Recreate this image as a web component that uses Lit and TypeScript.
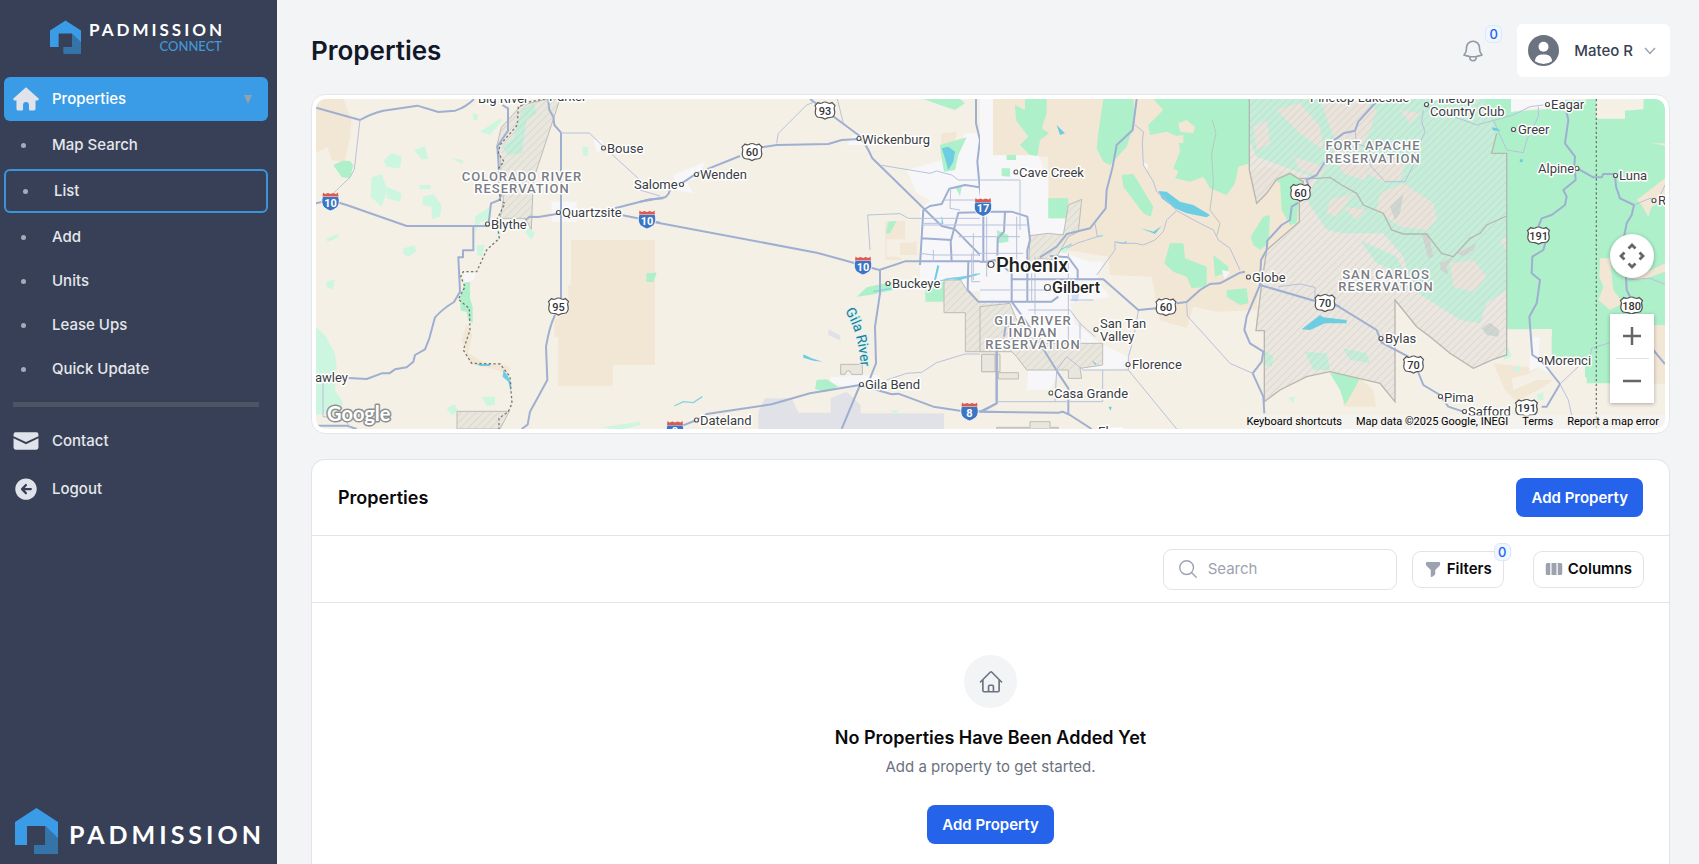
import { LitElement, html, svg, css } from "lit";
import { customElement, property, state } from "lit/decorators.js";
import { classMap } from "lit/directives/class-map.js";

/* ---------- icons ---------- */

const homeSolid = svg`<path d="M12 1.2 23.4 11.4a1.1 1.1 0 0 1-.8 1.9H20.800V21.300a1.300 1.300 0 0 1-1.300 1.300H15.700a1 1 0 0 1-1-1V17.500a2.700 2.700 0 0 0-5.400 0V21.600a1 1 0 0 1-1 1H4.500a1.300 1.300 0 0 1-1.300-1.300V13.300H1.400a1.100 1.100 0 0 1-.8-1.900Z"/>`;
const mailSolid = svg`<path d="M2.400 4h19.200A1.900 1.900 0 0 1 23.500 5.900V7.600L12 13 .5 7.600V5.900A1.900 1.900 0 0 1 2.400 4Z"/><path d="M.5 9.500 12 15l11.500-5.500V18a2 2 0 0 1-2 2h-19a2 2 0 0 1-2-2Z"/>`;
const logoutSolid = svg`<path fill-rule="evenodd" d="M12 2.200a9.900 9.900 0 1 0 0 19.800 9.900 9.900 0 0 0 0-19.800ZM11.200 7.600a1 1 0 0 1 1.500 1.400L10.900 11.100H16.500a1 1 0 0 1 0 2H10.900l1.800 2.100a1 1 0 0 1-1.500 1.400L7.600 12.900a1.100 1.100 0 0 1 0-1.500Z"/>`;
const bellLine = svg`<path d="M14.857 17.082a23.848 23.848 0 0 0 5.454-1.310A8.967 8.967 0 0 1 18 9.750V9A6 6 0 0 0 6 9v.750a8.967 8.967 0 0 1-2.312 6.022c1.733.640 3.560 1.085 5.455 1.310m5.714 0a24.255 24.255 0 0 1-5.714 0m5.714 0a3 3 0 1 1-5.714 0"/>`;
const homeLine = svg`<path d="m2.250 12 8.954-8.955c.440-.439 1.152-.439 1.591 0L21.750 12M4.500 9.750v10.125c0 .621.504 1.125 1.125 1.125H9.750v-4.875c0-.621.504-1.125 1.125-1.125h2.250c.621 0 1.125.504 1.125 1.125V21h4.125c.621 0 1.125-.504 1.125-1.125V9.750M8.250 21h8.250"/>`;
const searchLine = svg`<path d="m21 21-5.197-5.197m0 0A7.500 7.500 0 1 0 5.196 5.196a7.500 7.500 0 0 0 10.607 10.607Z"/>`;
const funnelSolid = svg`<path d="M4 2.500h16a1.500 1.500 0 0 1 1.500 1.500v1.600c0 .7-.3 1.400-.8 1.900L15 13.200V18.500c0 .6-.3 1.100-.8 1.400l-3.600 2.600c-.7.400-1.600-.1-1.600-.9v-8.400L3.300 7.500a2.700 2.700 0 0 1-.8-1.900V4A1.500 1.500 0 0 1 4 2.500Z"/>`;
const columnsSolid = svg`<path d="M3 4h4v16H3a2 2 0 0 1-2-2V6a2 2 0 0 1 2-2ZM8.700 4h6.600v16H8.700ZM17 4h4a2 2 0 0 1 2 2v12a2 2 0 0 1-2 2h-4Z"/>`;

const solid = (body: unknown, size: string) =>
  html`<svg class="icon ${size}" viewBox="0 0 24 24" fill="currentColor" aria-hidden="true">${body}</svg>`;
const line = (body: unknown, size: string) =>
  html`<svg class="icon ${size}" viewBox="0 0 24 24" fill="none" stroke="currentColor" stroke-width="1.5" stroke-linecap="round" stroke-linejoin="round" aria-hidden="true">${body}</svg>`;

const iconStyles = css`
  .icon { display: block; flex: none; }
  .s18 { width: 18px; height: 18px; }
  .s22 { width: 22px; height: 22px; }
  .s26 { width: 26px; height: 26px; }
`;

/* ---------- brand ---------- */

@customElement("brand-logo")
class BrandLogo extends LitElement {
  @property() tagline = "";
  @property({ type: Boolean, reflect: true }) large = false;

  static styles = css`
    :host { display: flex; align-items: center; gap: 8px; font-family: Lato, "Open Sans", sans-serif; }
    svg { width: 31px; height: 34px; flex: none; display: block; }
    .words { display: flex; flex-direction: column; align-items: flex-end; }
    .name { color: #fff; font-weight: 700; font-size: 17px; line-height: 18px; letter-spacing: 3px; margin-right: -3px; }
    .tag { color: #4299d8; font-size: 13px; line-height: 14px; }
    :host([large]) { gap: 11px; }
    :host([large]) svg { width: 43px; height: 46px; }
    :host([large]) .name { font-size: 25px; line-height: 24px; letter-spacing: 4px; margin-top: 6px; }
  `;

  render() {
    return html`
      <svg viewBox="0 0 43 46" aria-hidden="true">
        <path fill="#3a9be6" d="M21.500 0 43 14V46H19V37H30.500V18H12V37H0V14Z"/>
        <path fill="#3474a8" d="M30.500 18 43 30V46H19V37H30.500Z"/>
      </svg>
      <span class="words">
        <span class="name">PADMISSION</span>
        ${this.tagline ? html`<span class="tag">${this.tagline}</span>` : null}
      </span>`;
  }
}

/* ---------- sidebar ---------- */

@customElement("side-bar")
class SideBar extends LitElement {
  @state() current = "List";
  private links = ["Map Search", "List", "Add", "Units", "Lease Ups", "Quick Update"];

  static styles = [iconStyles, css`
    :host { display: flex; flex-direction: column; box-sizing: border-box; background: #374056; padding: 0 9px 10px 4px; color: #e5e7eb; font-size: 15px; line-height: 20px; font-weight: 500; }
    .top { display: flex; justify-content: center; padding: 20px 0 23px; }
    nav { display: flex; flex-direction: column; flex: 1; }
    a { color: inherit; text-decoration: none; }
    a, .group { display: flex; align-items: center; gap: 13px; box-sizing: border-box; height: 44px; padding: 0 9px; border-radius: 6px; }
    .group { font: inherit; border: 0; width: 100%; background: #3a9be6; color: #fff; margin-bottom: 2px; text-align: left; }
    .group .icon, .foot .icon { color: #e0e3ea; }
    .grow { flex: 1; }
    .arrow { width: 0; height: 0; border: 4px solid transparent; border-top: 9px solid #94a0ae; border-bottom: 0; margin-right: 7px; }
    .dot { width: 26px; display: grid; place-items: center; }
    .dot::before { content: ""; width: 5px; height: 5px; border-radius: 50%; background: #a3acba; margin-right: 6px; }
    .current { border: 2px solid #3a94da; margin: 2px 0; }
    hr { width: calc(100% - 18px); height: 5px; border: 0; background: #4c5563; margin: 11px 9px 10px; }
    .foot { height: 48px; }
    .bottom { padding-left: 11px; }
  `];

  render() {
    return html`
      <div class="top"><brand-logo tagline="CONNECT"></brand-logo></div>
      <nav aria-label="Main">
        <button class="group" type="button">${solid(homeSolid, "s26")}<span class="grow">Properties</span><span class="arrow"></span></button>
        ${this.links.map((name) => html`
          <a href="#" class=${classMap({ current: name === this.current })} @click=${() => (this.current = name)}>
            <span class="dot"></span>${name}</a>`)}
        <hr />
        <a class="foot" href="#">${solid(mailSolid, "s26")}Contact</a>
        <a class="foot" href="#">${solid(logoutSolid, "s26")}Logout</a>
      </nav>
      <div class="bottom"><brand-logo large></brand-logo></div>`;
  }
}

/* ---------- map ---------- */

type Place = { t: string; x: number; y: number; dot?: [number, number]; kind?: string };

const places: Place[] = [
  { t: "Big River", x: 478, y: 103 },
  { t: "Parker", x: 549, y: 101 },
  { t: "Bouse", x: 607, y: 153, dot: [603.5, 148.0] },
  { t: "Salome", x: 634, y: 189, dot: [681.5, 184.5] },
  { t: "Wenden", x: 700, y: 179, dot: [696.5, 174.5] },
  { t: "Wickenburg", x: 862, y: 144, dot: [859, 138.5] },
  { t: "Quartzsite", x: 562, y: 217, dot: [558.5, 212.5] },
  { t: "Blythe", x: 491, y: 229, dot: [487.5, 224.0] },
  { t: "awley", x: 315, y: 382 },
  { t: "Buckeye", x: 892, y: 288, dot: [888, 283.5] },
  { t: "Gila Bend", x: 865, y: 389, dot: [861.5, 384.5] },
  { t: "Dateland", x: 700, y: 425, dot: [696.5, 420] },
  { t: "Cave Creek", x: 1019, y: 177, dot: [1016, 172] },
  { t: "Phoenix", x: 996, y: 272, dot: [991, 264.5], kind: "city" },
  { t: "Gilbert", x: 1052, y: 293, dot: [1047.5, 287.5], kind: "town" },
  { t: "San Tan", x: 1100, y: 328, dot: [1096, 329.5] },
  { t: "Valley", x: 1100, y: 341 },
  { t: "Florence", x: 1132, y: 369, dot: [1128, 364.5] },
  { t: "Casa Grande", x: 1054, y: 398, dot: [1051, 393] },
  { t: "Eloy", x: 1098, y: 436 },
  { t: "Globe", x: 1252, y: 282, dot: [1248.5, 277] },
  { t: "Pinetop-Lakeside", x: 1310, y: 102 },
  { t: "Pinetop", x: 1430, y: 103, dot: [1426.5, 104.5] },
  { t: "Country Club", x: 1430, y: 116 },
  { t: "Eagar", x: 1551, y: 109, dot: [1547.5, 104.5] },
  { t: "Greer", x: 1518, y: 134, dot: [1513.5, 129.5] },
  { t: "Alpine", x: 1538, y: 173, dot: [1577, 168.5] },
  { t: "Luna", x: 1619, y: 180, dot: [1615.5, 175.5] },
  { t: "R", x: 1658, y: 205, dot: [1654, 200.5] },
  { t: "Bylas", x: 1385, y: 343, dot: [1381, 338.5] },
  { t: "Morenci", x: 1544, y: 365, dot: [1540.5, 359.5] },
  { t: "Pima", x: 1444, y: 402, dot: [1440.5, 396.5] },
  { t: "Safford", x: 1468, y: 416, dot: [1464.5, 411.5] },
  { t: "COLORADO RIVER", x: 522, y: 181, kind: "area" },
  { t: "RESERVATION", x: 522, y: 193, kind: "area" },
  { t: "GILA RIVER", x: 1033, y: 325, kind: "area" },
  { t: "INDIAN", x: 1033, y: 337, kind: "area" },
  { t: "RESERVATION", x: 1033, y: 349, kind: "area" },
  { t: "FORT APACHE", x: 1373, y: 150, kind: "area" },
  { t: "RESERVATION", x: 1373, y: 163, kind: "area" },
  { t: "SAN CARLOS", x: 1386, y: 279, kind: "area" },
  { t: "RESERVATION", x: 1386, y: 291, kind: "area" },
];

const interstates: [string, number, number][] = [
  ["10", 330.5, 201.5], ["10", 647, 219.5], ["10", 863, 265.5], ["17", 983, 207], ["8", 969.5, 411.5], ["8", 675, 430],
];
const usRoutes: [string, number, number][] = [
  ["95", 558.5, 306.5], ["60", 752, 152], ["93", 825, 110.5], ["60", 1166, 307], ["60", 1300.5, 192.5],
  ["70", 1325, 303], ["70", 1413.5, 364.5], ["191", 1538.5, 235.5], ["191", 1526.5, 408], ["180", 1631.5, 305.5],
];

/* Four survey sections side by side, drawn at three units to the pixel. */
const land = svg`
  <g>
    <path class="tan" d="M48 27H130L155 90 150 140 135 215 95 210 82 170 48 188ZM813 450H1065V825H938V888H775V740H763V690L790 675 805 670V585H813Z"/>
    <path class="tan" d="M485 750 500 700 517 735 505 790 560 822 600 818 635 835 620 850 570 835 510 822Z"/>
    <path class="urban" d="M755 335H830V395H755ZM880 150 905 150 920 180 890 185ZM490 548 530 550 520 570 495 578Z"/>
    <path class="mint" d="M100 225 128 212 150 213 160 225 150 265 125 262ZM495 577H510V625L518 650V700L505 690 500 665 482 662 480 620ZM1040 550 1070 548 1060 575 1040 575Z"/>
    <path class="pale" d="M48 712 75 735 105 790 110 830 105 900 130 940 115 965 48 975ZM250 212 275 188 305 200 300 235 260 230ZM343 180 375 168 385 208 365 208ZM455 205 490 210 488 222ZM215 262 245 252 262 300 245 350 212 320ZM262 290 305 310 300 335 260 325ZM358 285H392V298H358ZM368 320 400 312 425 345 420 380 395 388 395 350 368 345ZM310 475 345 465 348 485 325 500 308 490ZM80 575 105 568 98 600 80 592ZM80 445 120 430 110 445 82 455ZM525 380 570 350 572 390 540 395 525 430ZM530 465 555 465 545 500 532 495ZM540 125 600 85 605 92 570 135ZM518 68 535 75 530 92 520 88ZM848 170 865 170 862 200 848 195ZM676 405 705 430 695 450 678 430ZM545 920 585 920 585 945 560 948ZM440 955 465 942 475 965 455 975ZM905 1012 1020 995 1020 1005 960 1020ZM590 420 600 430 597 450Z"/>
    <path class="res" d="M604 112 665 45 745 27H780L700 270 694 418 676 385 600 385 610 330 600 200 590 170Z"/>
    <path class="res" d="M471 964H628L600 1017H471Z"/>
    <path class="mintres" d="M665 60 700 40 710 70 680 90 665 190 625 195 605 170 640 145Z"/>
    <path class="water" d="M530 822 570 822 570 828 540 828ZM610 840 622 855 634 880 632 905 625 875 608 860Z"/>
    <path class="road" d="M48 53 180 90Q210 72 250 62L352 47 415 66 466 62Q500 50 522 27M48 340 90 330 140 345 320 408H565L573 340 598 330 605 310M520 408V481H489V502H475L480 605 462 636Q430 655 405 682L388 745 375 778 345 795 340 815 320 832 285 838 268 850H245L200 867 145 864M607 45 624 55V122L592 170 597 240M744 27 748 60 760 80 763 105 783 128V625M765 675Q748 710 738 770L742 870Q715 920 690 965L683 1004 665 1017M676 390 690 380 715 381 783 370M905 372 968 376 1080 398M945 355 1050 328 1090 325M48 1007H140L170 1017"/>
    <path class="minor" d="M180 90 163 238 150 262 100 310M783 129H868L900 160 1020 270M69 875V980L130 985 150 1010M1020 300 1080 318"/>
    <path class="border" d="M735 27 690 35 655 50 652 105 600 165 595 190 612 215 595 235 600 330 615 340 590 390 598 445 560 480 530 545H490L482 560 495 590 475 628 508 655 510 720 490 780 515 820 600 822 630 860 636 940 625 965 597 985V1017"/>
  </g>
  <g transform="translate(1020)">
    <path class="tan" d="M735 395 795 392V448H740V500L775 500 790 510H735ZM905 130 950 125 940 190H900ZM880 300 940 290 930 330H905ZM780 460 830 455V495H780ZM1060 27H1080V196H1060Z"/>
    <path class="gray" d="M375 925 455 925 475 968H572V925L620 905 662 945V970H912V1017H355V965ZM565 718 600 735 602 752 565 735Z"/>
    <path class="urban" d="M800 240 940 200 975 130H1020V27H1080V600L980 605 960 575 840 580V360L870 330 830 310ZM100 255 150 235 195 215 180 260 140 275 160 310 110 300ZM570 862 720 855 690 895 575 885ZM640 135H700V165H620Z"/>
    <path class="mint" d="M900 165 980 142 955 195 945 240 912 245 905 205ZM850 27H960L975 40 945 60 900 45ZM650 620 680 592 780 570 760 600 690 615ZM856 590 912 575V635H856ZM20 550 48 548 40 575H20ZM530 870 560 868 595 890 560 905 525 898ZM738 430 745 395 770 392 750 430ZM945 290 965 290 960 318Z"/>
    <path class="pale" d="M750 962 775 960 770 972ZM975 635 1000 670 990 672Z"/>
    <path class="res" d="M912 570H962L980 600 1015 637H1080V785H976V668H912ZM602 823H667V853H635L630 843H620L615 853H602ZM1025 793H1080V845H1025Z"/>
    <path class="water" d="M905 175 925 170 945 185 940 215 925 240 915 205ZM490 793 515 805 548 815 520 812 490 803ZM882 570 892 525 898 528 888 570ZM912 565 975 560 1010 550 1010 556 960 570ZM905 375 910 400 905 405Z"/>
    <path class="wline" d="M103 948 130 935 160 938 187 920M700 605 755 595M890 575 920 568 1000 556 1045 545"/>
    <path class="road" d="M0 335 75 322Q92 310 90 290L125 280 170 250 300 198M365 172 410 165 565 162 605 150 657 147M510 27 655 135Q680 165 697 205L905 408 945 418 1030 505M25 393 530 488 640 518 718 540 795 514H1080M720 540V610L705 710 708 820 690 865M120 1010 170 990 200 972 395 943 510 910 660 885 755 913 775 911 880 950 960 962 1080 966M660 885 605 1017M840 525 850 360 870 348 905 342 928 296 975 285 1018 292M1008 27V100L1020 150 1012 215 1018 280 1025 340V515M845 445 935 450M935 515 932 455 955 368 1080 365M985 515 983 600 1015 635H1080M1070 780V940L1030 963M1030 515V535H1060"/>
    <path class="minor" d="M410 160 415 130 500 45 525 35M592 27 610 100M725 226 870 250 890 243 935 255 955 270H1020M690 480 683 375 780 371 805 385H1080M740 870 800 850 845 847 890 818 975 792H1020M840 490 880 495 1030 495M845 405H1080M910 330H1010M1000 430V570M850 400H910M932 300 930 355 960 360M955 440H1080M995 490V575H1080M880 480V515"/>
  </g>
  <g transform="translate(2040)">
    <path class="tan" d="M38 27H808V240L830 340 860 310 890 268 930 250 970 275 958 390 860 480 838 585 830 660 710 665 640 650 620 715 540 690 515 560 390 555 385 500 260 480 180 400 205 330V200H38Z"/>
    <path class="tan" d="M0 595 95 585 60 610 0 625ZM15 280H65L50 350 15 330Z"/>
    <path class="urban" d="M0 27H38V196H175L205 270V385H260L255 430 150 440 145 545 200 490 260 490 330 515H370L350 570 390 620 270 640 285 700 360 760 445 800 450 835 240 840 210 900 140 900 150 780 90 690 95 640H0ZM680 45 720 40 715 65 690 62Z"/>
    <path class="mint" d="M135 27H200V70L185 115 207 130 180 150 172 198 150 195 120 165 145 140 108 90 105 45 135 60ZM370 27H460L465 95 440 170 390 225 370 215 350 175 355 130ZM520 27H808V220L775 230 765 280 740 315 690 295 670 260 630 275 585 265 595 245 580 235 600 185 595 140 560 125 510 135 505 105 550 60ZM425 255 460 252 520 350 512 380 490 370 430 290ZM205 325H265L263 385H205ZM570 460 610 460 615 505 680 530V590L635 595 620 560 580 545 553 520ZM812 440 850 380 870 375 865 460 840 480 820 465ZM740 600 800 595 805 640 780 645 740 620ZM700 495 745 530 745 545 705 560ZM65 235 90 235 90 260 65 258ZM80 195H108V210H80ZM50 420 85 435 85 455 55 460ZM900 270 925 255 960 270 950 400 930 405 905 360Z"/>
    <path class="tan" d="M595 100 620 90 645 110 640 130 600 125ZM565 140 610 135 610 160 575 155Z"/>
    <path class="pale" d="M925 925 945 918 940 940ZM230 470 270 480 250 490Z"/>
    <path class="urban" d="M725 540 750 545 735 568ZM485 215 505 225 500 240Z"/>
    <path class="res" d="M265 345 305 328 295 425 265 440 225 510 175 505 145 545 150 437 205 430 250 435ZM0 650 90 640 110 690 200 760H368V825L300 835 305 865H265V840H140L110 800 95 785H0ZM5 793H45V845H5ZM55 848H115V867H55ZM50 1017V1012H150V995H210V1012H235V1017Z"/>
    <path class="water" d="M535 303 560 305 600 335 640 345 690 375 680 382 620 370 585 355 545 325ZM230 105 255 130 240 135ZM482 415 520 425 545 408 525 432ZM385 950 395 950 392 962ZM335 810 350 822 345 824Z"/>
    <path class="lake" d="M275 612H298L292 635 275 632Z"/>
    <path class="wline" d="M240 480 275 462M350 440 368 437M410 457 430 460 440 455"/>
  </g>
  <g transform="translate(3090)">
    <path class="mint" d="M-282 27H543V65L690 55 705 30H770V27H799V85H885V60L940 55V27H1005V880H770V832L700 760 665 755V718H530V760L490 700-270 200Z"/>
    <path class="urban" d="M543 27H705L700 50 600 55 543 65Z"/>
    <path class="tan" d="M810 505H840L850 600 880 640 840 660 805 630 820 590 808 560ZM920 330 1005 265V330L965 350 955 380 935 345ZM965 160H1005V167ZM900 570 1005 520V545L935 570ZM970 705H1005V880H970ZM40 860 90 865 130 900 138 950 40 950Z"/>
    <path class="cream" d="M799 27H940V58L885 62V86H799ZM530 760H605L600 718H665V800H700L765 862V880H530Z"/>
    <path class="tan" d="M490 820 620 835 600 850 545 865 550 900 620 870 670 870 640 890 560 935 525 900Z"/>
    <path class="urban" d="M610 742 630 742 625 790 640 810 660 850 625 830 598 845 600 790Z"/>
    <path class="mint" d="M0 850 60 850 90 865 60 920 45 945 30 900ZM665 740V800H765V862H800V740Z"/>
    <path class="pale" d="M620 915 640 905 640 930 625 932ZM535 770 545 800 520 810ZM545 840 570 825 570 845Z"/>
  </g>`;

const reserve = svg`
  <path class="resbase" d="M2848 27V240L2870 340 2900 310 2930 268 2970 250 3010 275 2998 330V395L2900 480 2885 580 2868 722H2893V935L2940 900 3020 860 3090 845 3240 880 3285 935V630L3350 710 3390 740 3450 790 3520 835 3580 808 3620 795V190H3575L3590 130 3550 27Z"/>
  <g clip-path="url(#reserve)">
    <path class="mintres" d="M2848 27H3620V600L3560 640 3540 700 3480 690 3340 600 3310 500 3250 430 3130 430 3080 420 3020 330 3050 265 2980 240 2870 200 2848 150Z"/>
    <path class="mintres" d="M2893 780 2920 800 2915 830 2893 825ZM3015 785 3080 790 3090 840 3040 840ZM3130 775 3200 790 3210 820 3150 810ZM3440 650 3520 610 3530 650 3470 680Z"/>
    <path class="beige" d="M2860 110 2900 90 2910 160 2870 180ZM2930 60 3000 40 3060 110 3070 180 3000 130 2960 90ZM3060 27H3180L3230 60 3210 120 3180 180 3100 140ZM3090 180 3210 190 3320 210 3300 270 3220 280 3130 250ZM3240 310 3310 280 3400 340 3410 390 3380 420 3300 410 3230 360ZM3450 520 3520 510 3560 560 3520 605 3460 590ZM2980 200 3080 230 3060 260 3000 240ZM3090 330 3160 310 3110 380 3080 370ZM3300 60 3360 70 3330 100ZM2890 230 2970 250 2870 330 2850 250ZM3600 450 3620 440V480ZM3130 350 3200 360 3170 390Z"/>
    <path class="mintres" d="M3200 250 3260 280 3230 330 3190 330ZM3400 180 3500 150 3600 260 3520 330 3420 320ZM3340 450 3450 460 3420 560 3340 540ZM3230 40 3290 50 3270 100ZM3180 450 3290 500 3320 560 3230 520Z"/>
    <path class="rock" d="M3270 350 3310 312 3300 370 3285 390ZM3365 430 3385 430 3400 500 3385 505ZM3470 490 3530 460 3520 480 3490 500ZM3420 520 3460 500 3440 530 3445 555 3422 540ZM3545 715 3570 698 3598 720 3595 740 3560 735Z"/>
    <path fill="url(#hatch)" d="M2848 27H3620V940H2848Z"/>
    <path class="water" d="M3005 718 3060 675 3070 682 3140 690V700L3075 700 3030 720Z"/>
  </g>
  <path class="edge" d="M3000 265 3050 265 3090 262 3125 285 3170 310 3190 345 3250 370 3275 420 3310 432 3380 432 3425 490 3460 500 3510 445 3540 430 3560 405 3620 378"/>
  <path class="edge" d="M2848 27V240L2870 340 2900 310 2930 268 2970 250 3010 275 2998 330V395L2900 480 2885 580 2868 722H2893V935L2940 900 3020 860 3090 845 3240 880 3285 935V630L3350 710 3390 740 3450 790 3520 835 3580 808 3620 795V190H3575L3590 130"/>
  <g transform="translate(2040)">
    <path class="road" d="M10 365V515M0 365H95L142 380 150 450 142 480V635M75 365 72 425 53 445 52 515M0 515H20L45 510 95 550V635L135 690 170 745 235 850 265 895V970M470 27 458 120 410 165 398 230 380 300 377 355 330 415 260 432 230 470 180 502M210 498 265 502 293 540V565M95 568H370L475 660 530 655M0 635H215L235 620M590 640 620 636 660 600 690 582 720 580 780 548 795 545M840 585 1005 633M1065 645 1080 650M1035 215 1010 255 980 270 985 285M955 338 935 350 930 390 905 405 862 452 860 480 843 510 840 585 800 680 793 720 810 760 850 785 845 815 818 850 850 920 853 970M50 780V940L0 965 235 968 248 965 270 975 335 1017M108 780 80 690 72 740"/>
    <path class="minor" d="M465 105 490 125 487 160 490 225 520 275 530 305 560 330 590 362 660 400 700 420 715 450 750 475 780 540M590 362 560 390 550 425 525 450 490 465 465 460 430 460 405 455V480L350 555M345 400 352 440 290 460 260 475M475 662 460 750 445 800 445 840 590 1017M620 640 622 678 660 720 750 820 818 850M0 405H140M0 440H120M0 490H130M50 935H368V840M225 935 230 840 260 800 310 840H445M155 550V635M165 500V690M265 490V780M145 660H270L300 700V780M270 630H340M300 700 345 740M895 590 960 582 1005 592V630M95 600H280M20 380V560M110 380V510M0 270H120V420M0 600H90"/>
    <path class="minor faint" d="M697 90 708 130 695 190 700 280 690 360 720 400 710 440"/>
  </g>
  <g transform="translate(3090)">
    <path class="road" d="M10 640 140 720 155 758 235 800M262 840 280 885 330 915 355 950 400 965M635 950H650L690 882 645 825 628 808 607 795 598 680 620 640 630 570 605 550 607 500 640 480 650 445M625 410 635 385 665 375 705 345 710 320 700 300 737 270 733 225 735 200 705 160 715 90 708 60M742 235 790 262H815L820 252H855L858 290 870 325 912 345 905 375 890 400 882 440M888 560 890 600 900 620M970 780 1005 822"/>
    <path class="road" d="M0 160 40 130 75 122 85 95 130 45 150 27"/>
    <path class="minor" d="M280 60 275 95 285 125 270 160 258 210 225 275H165L120 225 118 175 80 160 75 122M285 50 400 90 440 105 550 75 600 50 640 45M490 90 530 180 580 188 590 150 625 80V50M690 882 745 830M690 882 715 930 725 975M780 800 785 775 840 758M912 345 960 325 975 330M985 330 1005 285M888 570 960 565 1005 583"/>
    <path class="border" d="M799 27V1017"/>
    <path class="water" d="M485 112 500 115 512 122 490 122ZM569 212A5 5 0 1 1 579 212 5 5 0 1 1 569 212Z"/>
  </g>`;

@customElement("area-map")
class AreaMap extends LitElement {
  static styles = css`
    :host { display: block; position: relative; height: 330px; border-radius: 10px; overflow: hidden; background: #f5f0e5; font-family: Roboto, sans-serif; }
    .canvas { display: block; width: 100%; height: 100%; }
    .tan { fill: #f2e6d5; } .cream { fill: #f5f0e5; } .urban { fill: #f7f7f9; } .gray { fill: #e1e2e7; }
    .mint { fill: #adf0ca; } .pale { fill: #cdf6e0; } .water { fill: #6dcde3; } .lake { fill: #cfdcf8; }
    .resbase { fill: #ebe6df; } .mintres { fill: #c4eed9; } .beige { fill: #eae3db; } .rock { fill: #cfd5d0; }
    .res { fill: #e9e6de; stroke: #bdbcb7; stroke-width: 3; }
    .edge { fill: none; stroke: #b5b7b0; stroke-width: 4; }
    .road { fill: none; stroke: #9fafd1; stroke-width: 6; stroke-linejoin: round; }
    .minor { fill: none; stroke: #b7c1dc; stroke-width: 3; stroke-linejoin: round; }
    .faint { stroke: #b9c8c0; }
    .wline { fill: none; stroke: #83d3e4; stroke-width: 4; }
    .border { fill: none; stroke: #777; stroke-width: 4; stroke-dasharray: 7 7; }
    .label { font-size: 13px; fill: #3b3d42; stroke: #fff; stroke-width: 3px; stroke-linejoin: round; paint-order: stroke; }
    .area { text-anchor: middle; letter-spacing: 1px; fill: #7a7d85; font-weight: 500; }
    .city { font-size: 20px; font-weight: 500; fill: #222; }
    .town { font-size: 16px; font-weight: 500; fill: #222; }
    .river { font-size: 14px; fill: #1a7f99; stroke: #d7f0f2; stroke-width: 2px; paint-order: stroke; }
    .spot { fill: #fff; stroke: #555; stroke-width: 1.2; }
    .num { font-size: 11px; font-weight: 500; text-anchor: middle; fill: #333; }
    .inum { font-size: 11px; font-weight: 700; text-anchor: middle; fill: #fff; }
    .mark { position: absolute; left: 10px; bottom: 0; }
    .mark text { font-family: Lato, sans-serif; font-size: 20px; font-weight: 700; fill: #fff; stroke: #8d8f90; stroke-width: 3px; paint-order: stroke; stroke-linejoin: round; }
    .tools { position: absolute; right: 11px; bottom: 26px; display: grid; gap: 36px; }
    button { font: inherit; border: 0; padding: 0; background: #fff; display: grid; place-items: center; color: #666; }
    .pan { width: 44px; height: 44px; border-radius: 50%; box-shadow: 0 1px 4px rgb(0 0 0 / .3); }
    .zoom { width: 44px; background: #fff; box-shadow: 0 1px 4px rgb(0 0 0 / .3); display: grid; justify-items: center; }
    .zoom button { width: 44px; height: 44px; }
    .zoom i { width: 33px; height: 1px; background: #e3e3e3; }
    .tools svg { width: 26px; height: 26px; display: block; }
    .tools .zoom svg { width: 24px; height: 24px; }
    .legal { position: absolute; right: 0; bottom: 0; display: flex; gap: 14px; padding: 0 6px 0 2px; background: rgb(245 245 245 / .65); font-size: 11px; line-height: 14px; color: #000; }
    .legal a { color: inherit; text-decoration: none; }
    .legal button { background: none; color: inherit; display: inline; }
  `;

  render() {
    return html`
      <svg class="canvas" viewBox="316 99 1349 330" preserveAspectRatio="xMidYMid slice" role="img" aria-label="Map of Arizona">
        <defs>
          <pattern id="hatch" width="16" height="16" patternUnits="userSpaceOnUse" patternTransform="rotate(45)"><path d="M0 0V16" stroke="#bdbdb0" stroke-opacity=".38" stroke-width="5"/></pattern>
          <clipPath id="reserve"><path d="M2848 27V240L2870 340 2900 310 2930 268 2970 250 3010 275 2998 330V395L2900 480 2885 580 2868 722H2893V935L2940 900 3020 860 3090 845 3240 880 3285 935V630L3350 710 3390 740 3450 790 3520 835 3580 808 3620 795V190H3575L3590 130 3550 27Z"/></clipPath>
          <path id="gila" d="M845 311Q861 336 861 378"/>
        </defs>
        <g transform="translate(300 90) scale(.333333)">${land}${reserve}
          <path fill="url(#hatch)" d="M604 112 665 45 745 27H780L700 270 694 418 676 385 600 385 610 330ZM471 964H628L600 1017H471ZM1932 570H1982L2035 637 2130 640 2150 690 2240 760H2408V825L2340 835 2300 840H2180L2135 785H1996V668H1932ZM2305 345 2345 328 2335 425 2305 440 2265 510 2215 505 2185 545 2190 437 2290 435Z"/>
        </g>
        ${places.map((p) => svg`
          ${p.dot ? svg`<circle class="spot" cx=${p.dot[0]} cy=${p.dot[1]} r=${p.kind ? 3 : 2}/>` : null}
          <text class="label ${p.kind ?? ""}" x=${p.x} y=${p.y}>${p.t}</text>`)}
        <text class="river"><textPath href="#gila">Gila River</textPath></text>
        ${usRoutes.map(([n, x, y]) => svg`<g transform="translate(${x} ${y})">
          <path fill="#fff" stroke="#555" stroke-width="1.200" transform="scale(${n.length > 2 ? 1.1 : 1} 1)" d="M-7-8Q-5-6.500-3-7.500-1.500-8.500 0-8.500 1.500-8.500 3-7.500 5-6.500 7-8L10-5Q8.500-3 9.500 0 10.500 4 7.500 6.500 5 7 3 7.200L0 8.500-3 7.200Q-5 7-7.500 6.500-10.500 4-9.500 0-8.500-3-10-5Z"/>
          <text class="num" y="4">${n}</text></g>`)}
        ${interstates.map(([n, x, y]) => svg`<g transform="translate(${x} ${y})">
          <path fill="#3b75c4" stroke="#fff" stroke-width=".8" d="M-8-5H8Q10 2 6.500 6 3 8.500 0 9.500-3 8.500-6.500 6-10 2-8-5Z"/>
          <path fill="#dd5a52" d="M-7.500-9-5.500-7.500-2.500-8.500 0-7.500 2.500-8.500 5.500-7.500 7.500-9 8-5H-8Z"/>
          <text class="inum" y="5">${n}</text></g>`)}
      </svg>
      <svg class="mark" width="80" height="28" aria-label="Google"><text x="1" y="20">Google</text></svg>
      <div class="tools">
        <button class="pan" type="button" aria-label="Map camera controls"><svg viewBox="0 0 26 26" fill="none" stroke="currentColor" stroke-width="2.800"><path d="M9.500 5.500 13 2l3.500 3.500M9.500 20.500 13 24l3.500-3.500M5.500 9.500 2 13l3.500 3.500M20.500 9.500 24 13l-3.500 3.500"/></svg></button>
        <div class="zoom">
          <button type="button" aria-label="Zoom in"><svg viewBox="0 0 24 24" stroke="currentColor" stroke-width="2.500"><path d="M3 12H21M12 3V21"/></svg></button>
          <i></i>
          <button type="button" aria-label="Zoom out"><svg viewBox="0 0 24 24" stroke="currentColor" stroke-width="2.500"><path d="M3 12H21"/></svg></button>
        </div>
      </div>
      <div class="legal"><button type="button">Keyboard shortcuts</button><span>Map data ©2025 Google, INEGI</span><a href="#">Terms</a><a href="#">Report a map error</a></div>`;
  }
}

/* ---------- page ---------- */

@customElement("app-root")
class AppRoot extends LitElement {
  static styles = [iconStyles, css`
    :host { display: grid; grid-template-columns: 277px minmax(0, 1fr); height: 100vh; overflow: hidden; background: #f3f4f6; color: #111827; font-family: Inter, "Liberation Sans", sans-serif; font-size: 15px; line-height: 20px; }
    main { padding: 24px 29px 0 34px; overflow: hidden; display: flex; flex-direction: column; }
    header { display: flex; align-items: center; justify-content: space-between; height: 53px; margin-bottom: 17px; flex: none; }
    h1 { margin: 0; font-size: 26px; line-height: 32px; font-weight: 600; }
    h2, h3 { margin: 0; font-size: 18px; line-height: 24px; font-weight: 600; color: #09090b; }
    button { font: inherit; cursor: pointer; }
    .account { display: flex; align-items: center; gap: 31px; height: 100%; }
    .bell { position: relative; border: 0; background: none; padding: 0; color: #9299a6; }
    .badge { position: absolute; box-sizing: border-box; height: 18px; min-width: 17px; display: grid; place-items: center; border: 1px solid #d9e9fd; border-radius: 6px; background: #eff6ff; color: #2563eb; font-size: 13px; line-height: 16px; font-weight: 500; }
    .bell .badge { left: 25px; top: -13px; }
    .user { display: flex; align-items: center; height: 53px; padding: 0 14px 0 11px; border: 0; border-radius: 6px; background: #fff; color: #374151; font-weight: 500; }
    .user .avatar { width: 31px; height: 31px; margin-right: 15px; }
    .user .chev { width: 12px; height: 8px; margin-left: 11px; }
    .map { border: 1px solid #e4e6ea; border-radius: 14px; padding: 4px; background: #fff; margin-bottom: 25px; flex: none; }
    .card { border: 1px solid #e4e4e7; border-bottom: 0; border-radius: 14px 14px 0 0; background: #fff; flex: 1; }
    .head { display: flex; align-items: center; justify-content: space-between; height: 76px; box-sizing: border-box; padding: 0 26px; border-bottom: 1px solid #e4e4e7; }
    .primary { box-sizing: border-box; height: 39px; border: 0; border-radius: 8px; padding: 0 15px; background: #2563eb; color: #fff; font-weight: 600; }
    .bar { display: flex; align-items: center; justify-content: flex-end; height: 67px; box-sizing: border-box; padding: 0 25px; border-bottom: 1px solid #e4e4e7; }
    .search { display: flex; align-items: center; gap: 9px; box-sizing: border-box; width: 234px; height: 41px; padding: 0 13px; border: 1px solid #e2e3e6; border-radius: 9px; color: #9ca3af; margin-right: 15px; }
    .search input { font: inherit; border: 0; outline: 0; padding: 0; min-width: 0; flex: 1; background: none; color: #111827; }
    .search input::placeholder { color: #9ca3af; opacity: 1; }
    .ghost { position: relative; display: flex; align-items: center; gap: 5px; box-sizing: border-box; height: 37px; padding: 0 11px; border: 1px solid #e2e3e6; border-radius: 9px; background: #fff; color: #09090b; font-weight: 600; }
    .ghost + .ghost { margin-left: 29px; }
    .ghost .icon { color: #9ca3af; }
    .ghost .badge { right: -8px; top: -9px; }
    .empty { display: flex; flex-direction: column; align-items: center; padding-top: 52px; }
    .disc { display: grid; place-items: center; width: 53px; height: 53px; border-radius: 50%; background: #f3f4f6; color: #6b7280; margin-bottom: 18px; }
    .empty p { margin: 7px 0 28px; color: #6b7280; }
    .hidden { position: absolute; width: 1px; height: 1px; overflow: hidden; clip-path: inset(50%); }
  `];

  render() {
    return html`
      <side-bar></side-bar>
      <main>
        <header>
          <h1>Properties</h1>
          <div class="account">
            <button class="bell" type="button" aria-label="Notifications">${line(bellLine, "s26")}<span class="badge">0</span></button>
            <button class="user" type="button">
              <svg class="avatar" viewBox="0 0 31 31" aria-hidden="true"><circle cx="15.500" cy="15.500" r="15.500" fill="#6b7280"/><circle cx="15.500" cy="11.800" r="5" fill="#fff"/><path fill="#fff" d="M7 26.300C7 21.500 10.500 19.600 15.500 19.600S24 21.500 24 26.300Q20 29 15.500 29T7 26.300Z"/></svg>
              Mateo R
              <svg class="chev" viewBox="0 0 12 8" fill="none" stroke="#9ca3af" stroke-width="1.500" aria-hidden="true"><path d="m1 1 5 5.500L11 1"/></svg>
            </button>
          </div>
        </header>
        <div class="map"><area-map></area-map></div>
        <section class="card">
          <div class="head"><h2>Properties</h2><button class="primary" type="button">Add Property</button></div>
          <div class="bar">
            <div class="search">${line(searchLine, "s22")}<label class="hidden" for="q">Search</label><input id="q" type="search" placeholder="Search" /></div>
            <button class="ghost" type="button">${solid(funnelSolid, "s18")}Filters<span class="badge">0</span></button>
            <button class="ghost" type="button">${solid(columnsSolid, "s18")}Columns</button>
          </div>
          <div class="empty">
            <div class="disc">${line(homeLine, "s26")}</div>
            <h3>No Properties Have Been Added Yet</h3>
            <p>Add a property to get started.</p>
            <button class="primary" type="button">Add Property</button>
          </div>
        </section>
      </main>`;
  }
}
